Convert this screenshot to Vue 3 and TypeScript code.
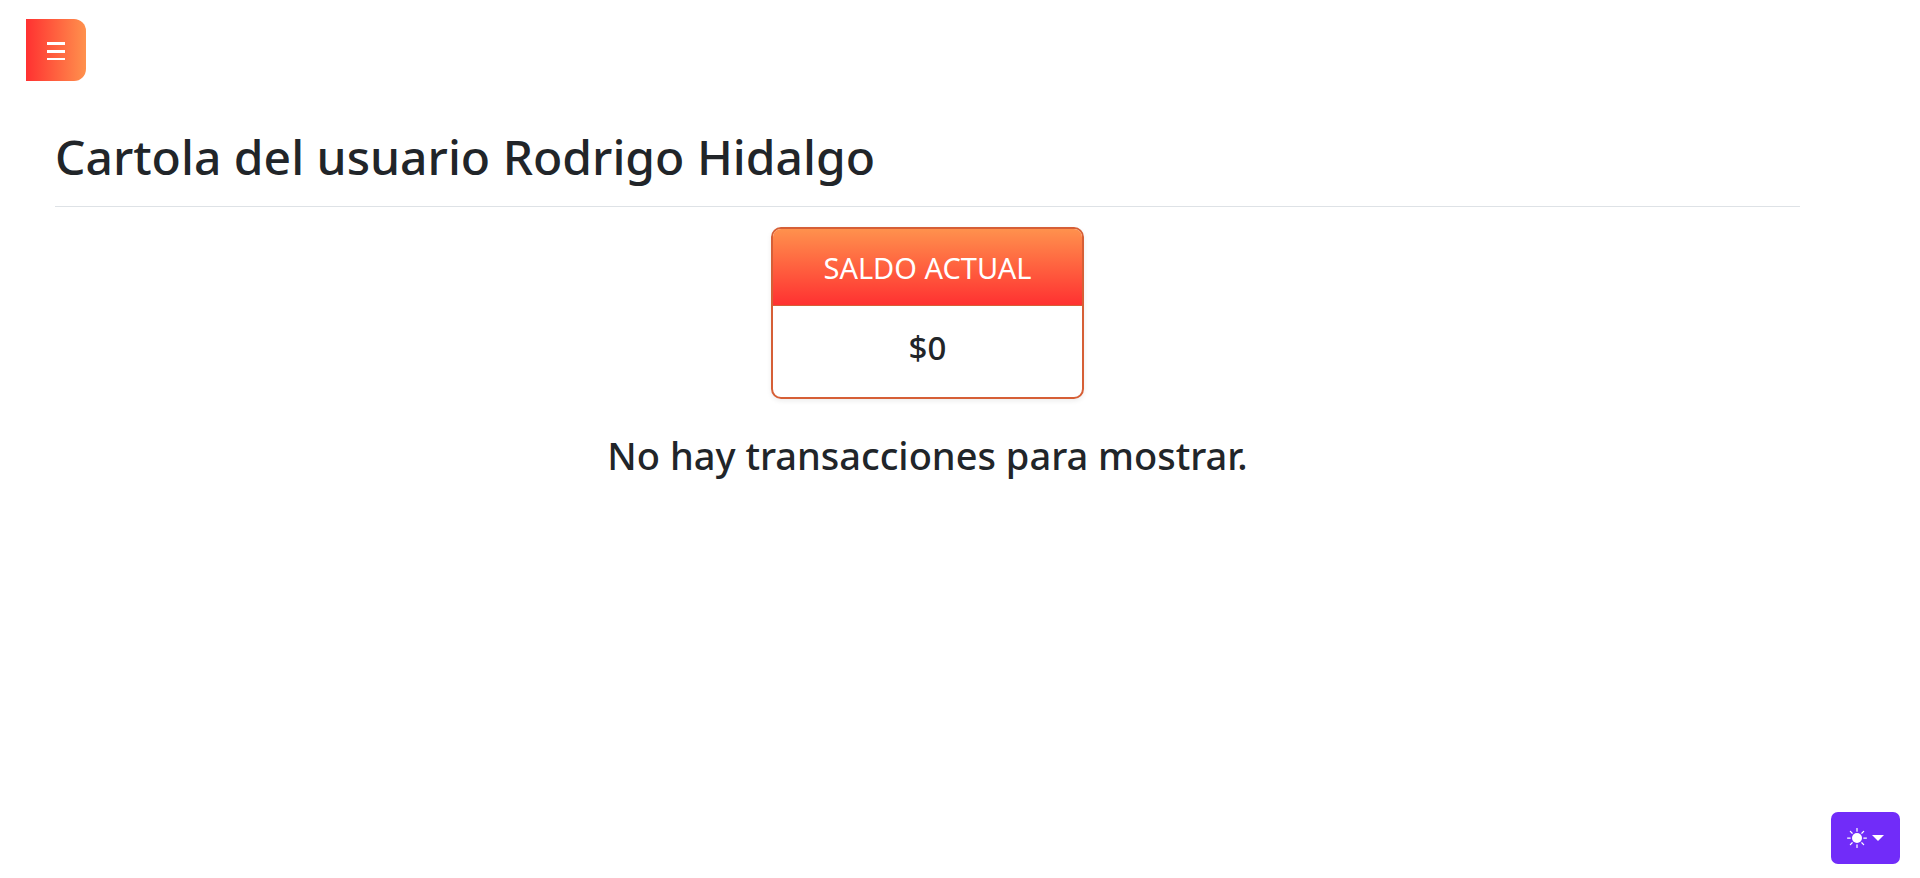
<script setup lang="ts">
import { ref } from 'vue'

const userName = ref<string>('Rodrigo Hidalgo')
const balance = ref<number>(0)
const rays: number[] = [0, 45, 90, 135, 180, 225, 270, 315]
</script>

<template>
  <div class="page">
    <header class="topbar">
      <button class="menu-button" type="button" aria-label="Menú">
        <svg class="menu-icon" viewBox="0 0 18 20" aria-hidden="true">
          <path d="M0 1h18v3H0zM0 9h18v3H0zM0 17h18v2H0z" fill="#fff" />
        </svg>
      </button>
    </header>

    <main class="content">
      <h1 class="title">Cartola del usuario {{ userName }}</h1>
      <section class="card">
        <h2 class="card-header">SALDO ACTUAL</h2>
        <p class="card-body">${{ balance }}</p>
      </section>
      <p class="empty">No hay transacciones para mostrar.</p>
    </main>

    <button class="theme-button" type="button" aria-label="Cambiar tema">
      <svg class="sun" viewBox="0 0 20 20" aria-hidden="true">
        <circle cx="10" cy="10" r="5" fill="#fff" />
        <path
          v-for="angle in rays"
          :key="angle"
          d="M10 0.6v2.6"
          stroke="#fff"
          stroke-width="1.25"
          stroke-linecap="round"
          :transform="`rotate(${angle} 10 10)`"
        />
      </svg>
      <span class="caret"></span>
    </button>
  </div>
</template>

<style>
body {
  margin: 0;
  background: #fff;
}
</style>

<style scoped>
.page {
  box-sizing: border-box;
  min-height: 100vh;
  padding: 19px 120px 20px 26px;
  font-family: 'Segoe UI', 'Noto Sans', sans-serif;
  color: #212529;
}

.topbar {
  display: flex;
}

.menu-button {
  display: flex;
  align-items: center;
  justify-content: center;
  width: 60px;
  height: 62px;
  padding: 2px 0 0;
  border: 0;
  border-radius: 0 12px 12px 0;
  background: linear-gradient(to right, #ff3131, #ff914d);
  cursor: pointer;
}

.menu-icon {
  width: 18px;
  height: 20px;
}

.content {
  display: flex;
  flex-direction: column;
  align-items: center;
  margin: 46px 0 0 29px;
}

.title {
  align-self: stretch;
  margin: 0 0 20px;
  padding-bottom: 19px;
  border-bottom: 1px solid #dee2e6;
  font-size: 48px;
  line-height: 60px;
  font-weight: 500;
}

.card {
  box-sizing: border-box;
  width: 313px;
  overflow: hidden;
  border: 2px solid #d65f36;
  border-radius: 10px;
  box-shadow: 0 2px 5px rgba(0, 0, 0, 0.075);
  text-align: center;
}

.card-header {
  margin: 0;
  padding: 21px 20px 19px;
  border-bottom: 1px solid #d65f36;
  background: linear-gradient(to bottom, #ff914d, #ff3131);
  color: #fff;
  font-size: 29px;
  line-height: 36px;
  font-weight: 400;
}

.card-body {
  margin: 0;
  padding: 21px 20px 28px;
  font-size: 33px;
  line-height: 42px;
  font-weight: 500;
}

.empty {
  margin: 32px 0 0;
  font-size: 38px;
  line-height: 48px;
  font-weight: 500;
}

.theme-button {
  position: fixed;
  right: 20px;
  bottom: 14px;
  display: flex;
  align-items: center;
  justify-content: center;
  gap: 5px;
  width: 69px;
  height: 52px;
  padding: 0;
  border: 0;
  border-radius: 7px;
  background: #712cf9;
  cursor: pointer;
}

.sun {
  width: 20px;
  height: 20px;
}

.caret {
  border-top: 6px solid #fff;
  border-right: 6px solid transparent;
  border-left: 6px solid transparent;
}
</style>
